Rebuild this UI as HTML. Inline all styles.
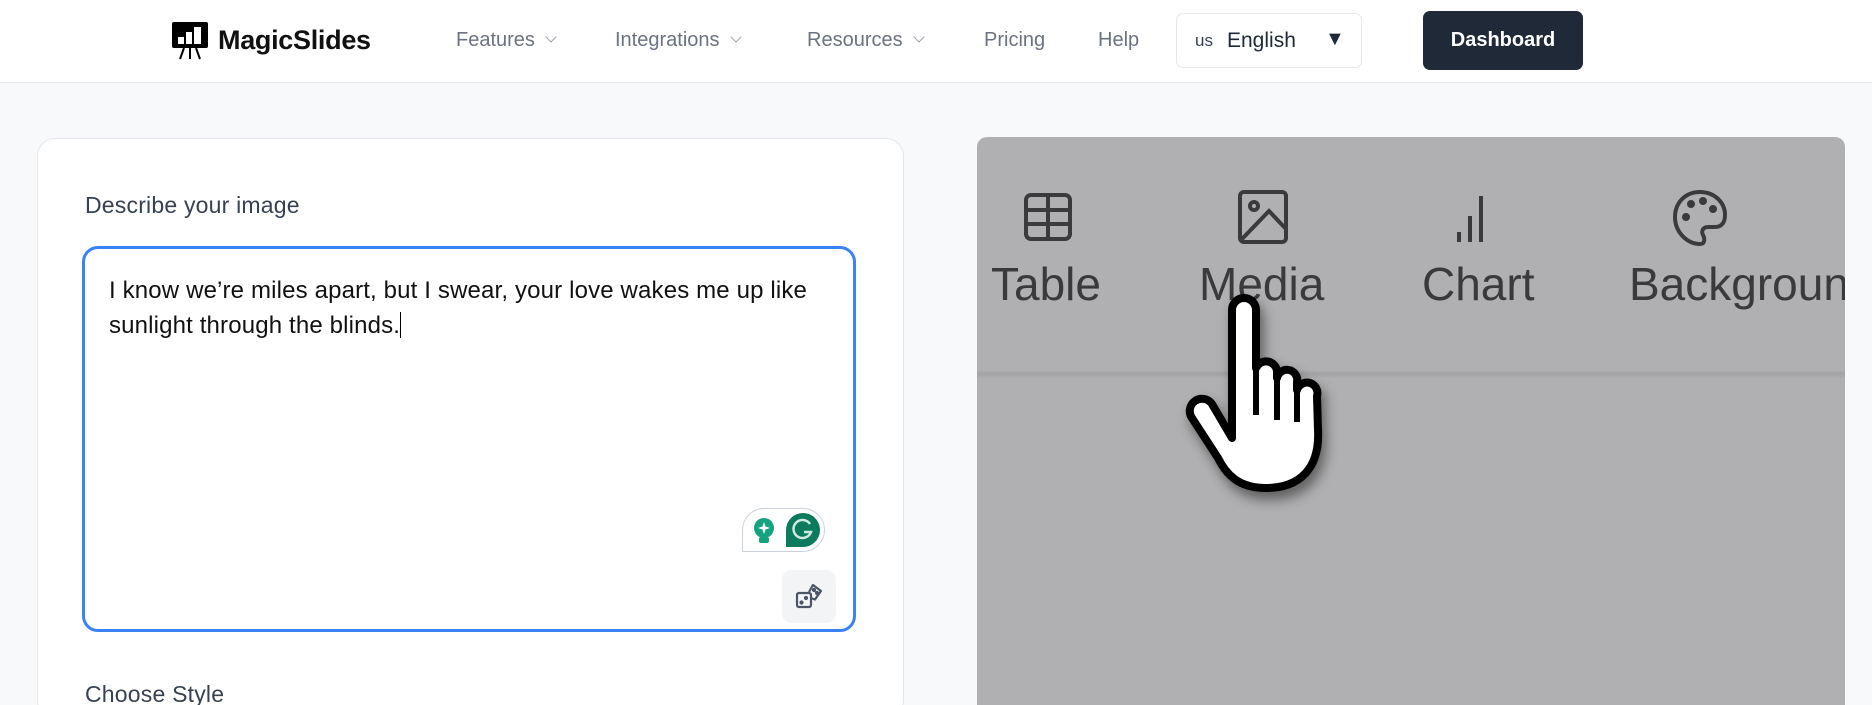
<!DOCTYPE html>
<html><head><meta charset="utf-8"><style>
*{margin:0;padding:0;box-sizing:border-box}
html,body{width:1872px;height:705px;overflow:hidden}
body{background:#f8f9fb;font-family:"Liberation Sans",sans-serif;position:relative}
.hdr{position:absolute;left:0;top:0;width:1872px;height:83px;background:#fff;border-bottom:1px solid #e5e7eb}
.nav{position:absolute;top:29px;font-size:20px;color:#6b7280}
.chev{display:inline-block;width:8px;height:8px;border-right:1.5px solid #9ca3af;border-bottom:1.5px solid #9ca3af;transform:rotate(45deg);margin-left:12px;position:relative;top:-5px}
.card{position:absolute;left:37px;top:138px;width:867px;height:580px;background:#fff;border:1px solid #e5e7eb;border-radius:18px}
.lbl{position:absolute;font-size:23px;color:#374151;letter-spacing:0.2px}
.ta{position:absolute;left:82px;top:246px;width:774px;height:386px;border:3px solid #3b82f6;border-radius:16px;background:#fff}
.txt{position:absolute;left:24px;top:24px;font-size:24px;line-height:35px;color:#111;letter-spacing:0.15px;white-space:nowrap}
.panel{position:absolute;left:977px;top:137px;width:868px;height:590px;background:#b0b0b2;border-radius:10px;overflow:hidden}
.it{position:absolute;top:120px;font-size:46px;color:#3a3a3d;white-space:nowrap}
</style></head><body>
<div class="hdr">
 <svg style="position:absolute;left:172px;top:22px" width="36" height="38" viewBox="0 0 36 38"><rect x="0" y="0" width="36" height="26" rx="2" fill="#000"/><rect x="6" y="15" width="6" height="7" fill="#fff"/><rect x="14" y="10" width="6" height="12" fill="#fff"/><rect x="22" y="5" width="7" height="17" fill="#fff"/><path d="M12 26 L8 37 M18 26 V37 M24 26 L28 37" stroke="#000" stroke-width="2"/></svg>
 <div style="position:absolute;left:218px;top:25px;font-size:27px;font-weight:bold;color:#111;letter-spacing:-0.3px">MagicSlides</div>
 <div class="nav" style="left:456px">Features<span class="chev"></span></div>
 <div class="nav" style="left:615px">Integrations<span class="chev"></span></div>
 <div class="nav" style="left:807px">Resources<span class="chev"></span></div>
 <div class="nav" style="left:984px">Pricing</div>
 <div class="nav" style="left:1098px">Help</div>
 <div style="position:absolute;left:1176px;top:13px;width:186px;height:55px;border:1px solid #e5e7eb;border-radius:7px;background:#fff">
  <span style="position:absolute;left:18px;top:17px;font-size:17px;color:#374151">us</span>
  <span style="position:absolute;left:50px;top:15px;font-size:21px;color:#1f2937">English</span>
  <span style="position:absolute;left:148px;top:14px;font-size:20px;color:#1f2937">▼</span>
 </div>
 <div style="position:absolute;left:1423px;top:11px;width:160px;height:59px;background:#1f2937;border-radius:7px;color:#fff;font-size:20px;font-weight:bold;text-align:center;line-height:59px">Dashboard</div>
</div>
<div class="card"></div>
<div class="lbl" style="left:85px;top:192px">Describe your image</div>
<div class="ta">
 <div class="txt">I know we’re miles apart, but I swear, your love wakes me up like<br>sunlight through the blinds.<span style="display:inline-block;width:1px;height:26px;background:#000;vertical-align:-5px"></span></div>
 <div style="position:absolute;left:657px;top:259px;width:83px;height:44px;border:1.5px solid #cbd2dc;border-radius:22px;border-bottom-left-radius:0;background:#fff">
  <svg style="position:absolute;left:8px;top:8px" width="26" height="28" viewBox="0 0 26 28"><circle cx="13" cy="11" r="10" fill="#15a37f"/><rect x="8" y="20" width="10" height="6" rx="2" fill="#15a37f"/><path d="M13 5 L14.5 9.5 L19 11 L14.5 12.5 L13 17 L11.5 12.5 L7 11 L11.5 9.5Z" fill="#fff"/></svg>
  <div style="position:absolute;left:43px;top:4px;width:34px;height:34px;background:#0c7a5d;border-radius:17px 17px 17px 0"><svg width="34" height="34" viewBox="0 0 34 34"><path d="M24 11 A9 9 0 1 0 25 19 H18" fill="none" stroke="#cfe9e0" stroke-width="2.5"/></svg></div>
 </div>
 <div style="position:absolute;left:697px;top:321px;width:54px;height:53px;background:#f3f4f6;border-radius:10px">
  <svg style="position:absolute;left:12px;top:11px" width="30" height="30" viewBox="0 0 30 30" fill="none" stroke="#4b5563" stroke-width="2.2" stroke-linejoin="round"><rect x="3" y="12" width="14" height="14" rx="2"/><path d="M17 17 L21 18.5 L27 10 L19 4 L15 11"/><circle cx="7.5" cy="21.5" r="1" fill="#4b5563"/><circle cx="12" cy="17" r="1" fill="#4b5563"/><circle cx="20" cy="9" r="1" fill="#4b5563"/><circle cx="23" cy="12" r="1" fill="#4b5563"/></svg>
 </div>
</div>
<div class="lbl" style="left:85px;top:681px">Choose Style</div>
<div class="panel">
 <div style="position:absolute;left:0;top:233px;width:868px;height:8px;background:linear-gradient(#b0b0b2,#a2a2a4,#b0b0b2)"></div>
 <svg style="position:absolute;left:46px;top:55px" width="50" height="50" viewBox="0 0 50 50" fill="none" stroke="#3a3a3d" stroke-width="4"><rect x="3" y="3" width="44" height="44" rx="5"/><path d="M3 18H47M3 32H47M25 3V47"/></svg>
 <svg style="position:absolute;left:260px;top:52px" width="52" height="56" viewBox="0 0 52 56" fill="none" stroke="#3a3a3d" stroke-width="4"><rect x="3" y="3" width="46" height="50" rx="4"/><circle cx="17" cy="17" r="4"/><path d="M5 50 L32 22 L49 40"/></svg>
 <svg style="position:absolute;left:478px;top:55px" width="30" height="52" viewBox="0 0 30 52" fill="none" stroke="#3a3a3d" stroke-width="4"><path d="M4 50V40M15 50V24M26 50V4"/></svg>
 <svg style="position:absolute;left:695px;top:52px" width="56" height="58" viewBox="0 0 56 58" fill="none" stroke="#3a3a3d" stroke-width="4"><path d="M28 3C13 3 3 14 3 28C3 43 15 55 28 55C33 55 33 50 31 46C29 42 31 38 36 38H43C50 38 53 33 53 26C53 13 42 3 28 3Z"/><circle cx="14" cy="28" r="2" fill="#3a3a3d"/><circle cx="19" cy="15" r="2" fill="#3a3a3d"/><circle cx="31" cy="12" r="2" fill="#3a3a3d"/><circle cx="41" cy="20" r="2" fill="#3a3a3d"/></svg>
 <div class="it" style="left:14px">Table</div>
 <div class="it" style="left:222px">Media</div>
 <div class="it" style="left:445px">Chart</div>
 <div class="it" style="left:652px">Background</div>
</div>
<svg style="position:absolute;left:1168px;top:290px;filter:drop-shadow(4px 8px 6px rgba(0,0,0,.45))" width="170" height="210" viewBox="0 0 170 210">
 <path d="M64 20 a12 12 0 0 1 24 0 L88 78 a11 11 0 0 1 21 3 L109 88 a10 10 0 0 1 20 4 L129 100 a10 10 0 0 1 20 6 L150 140 C152 178 132 198 98 198 C70 198 58 184 50 168 L24 128 a12 12 0 0 1 20 -14 L64 148 Z" fill="#fff" stroke="#000" stroke-width="8" stroke-linejoin="round"/>
 <path d="M88 78 V125 M109 88 V130 M129 100 V132" stroke="#000" stroke-width="6"/>
</svg>
</body></html>
